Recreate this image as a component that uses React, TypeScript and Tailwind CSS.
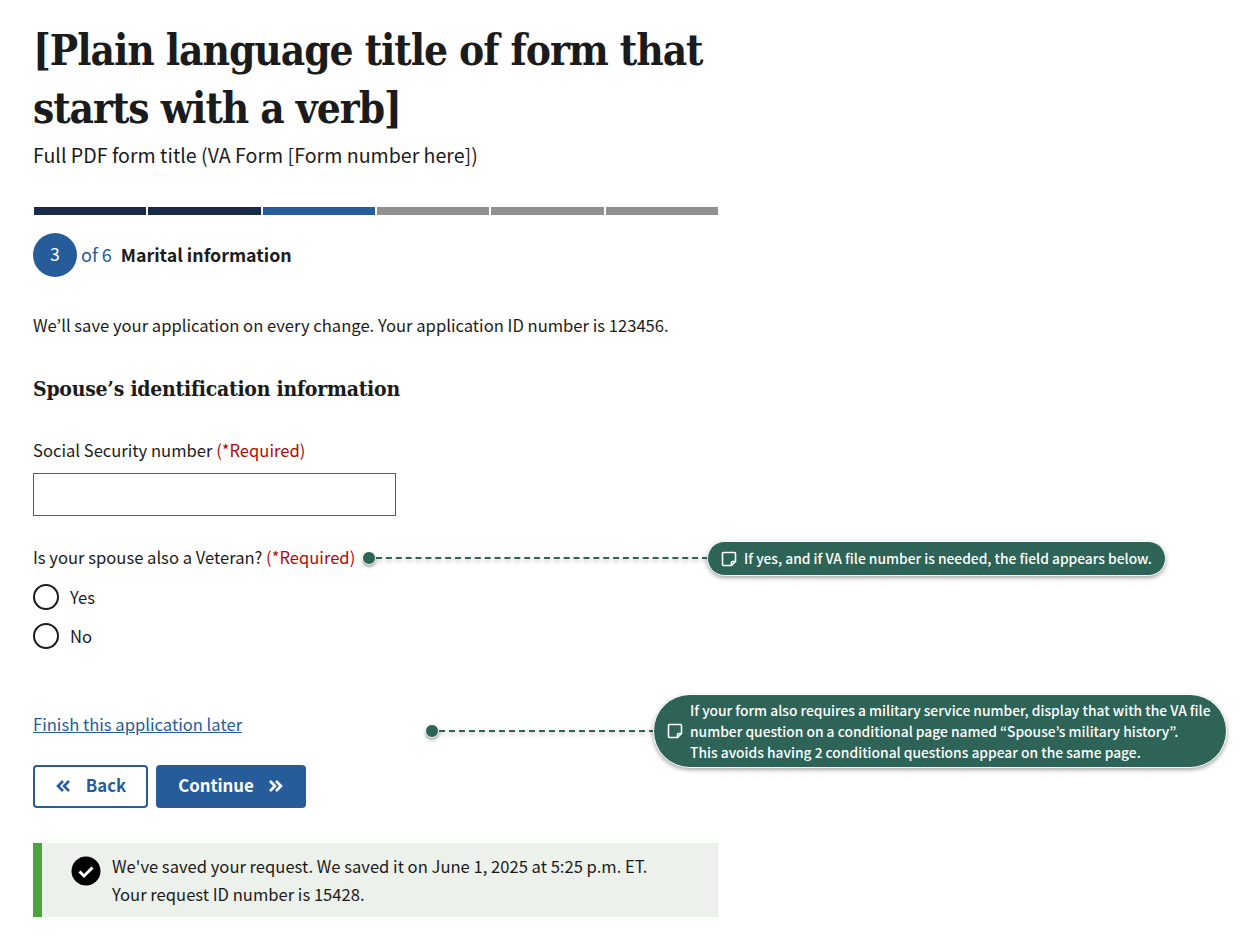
const sans = "font-['Noto_Sans_CJK_KR',sans-serif]";
const serif = "font-['DejaVu_Serif',serif] [font-stretch:condensed]";

function NoteIcon({ className }: { className: string }) {
  return (
    <svg viewBox="0 0 16 16" className={className} fill="none" stroke="white" strokeWidth="1.6" strokeLinejoin="round">
      <path d="M2.5 1.5h11a1 1 0 0 1 1 1v8l-4 4h-8a1 1 0 0 1-1-1v-11a1 1 0 0 1 1-1Z" />
      <path d="M14.5 10.5h-3a1 1 0 0 0-1 1v3" />
    </svg>
  );
}

function Dot({ className }: { className: string }) {
  return <div className={`absolute h-[14px] w-[14px] rounded-full border border-white bg-[#2d6457] shadow-[0_2px_3px_rgba(0,0,0,0.35)] ${className}`} />;
}

function Line({ className }: { className: string }) {
  return <div className={`absolute h-0 border-t-2 border-dashed border-[#2d6457] drop-shadow-[0_2px_2px_rgba(0,0,0,0.3)] ${className}`} />;
}

function Radio({ label, rowClass }: { label: string; rowClass: string }) {
  return (
    <div className={`flex items-center ${rowClass}`}>
      <span className="h-[26px] w-[26px] rounded-full border-2 border-[#1b1b1b] bg-white" />
      <span className="ml-[11px] text-[16.6px] leading-[24px] text-[#1b1b1b]">{label}</span>
    </div>
  );
}

export default function App() {
  return (
    <div lang="en" className={`relative h-[936px] w-[1254px] overflow-hidden bg-white pl-[33px] pt-[22px] ${sans}`}>
      <main className="w-[685px]">
        <h1 className={`${serif} text-[42px] font-bold leading-[58px] tracking-[-1.05px] text-[#1b1b1b]`}>
          [Plain language title of form that starts with a verb]
        </h1>
        <p className="mt-[3px] text-[19.6px] leading-[28px] text-[#1b1b1b]">Full PDF form title (VA Form [Form number here])</p>

        <div className="mt-[38px] flex gap-[2px] pl-[1px]">
          <div className="h-[8px] flex-1 bg-[#1a2b4a]" />
          <div className="h-[8px] flex-1 bg-[#1a2b4a]" />
          <div className="h-[8px] flex-1 bg-[#275c9b]" />
          <div className="h-[8px] flex-1 bg-[#919191]" />
          <div className="h-[8px] flex-1 bg-[#919191]" />
          <div className="h-[8px] flex-1 bg-[#919191]" />
        </div>

        <div className="mt-[18px] flex h-[44px] items-center">
          <span className="flex h-[44px] w-[44px] items-center justify-center rounded-full bg-[#275c9b] pb-[2px] text-[17.6px] text-white">3</span>
          <span className="mb-[2px] ml-[4px] text-[18px] text-[#275c9b]">of 6</span>
          <span className="mb-[2px] ml-[9px] text-[17.8px] font-bold text-[#1b1b1b]">Marital information</span>
        </div>

        <p className="mt-[36px] text-[16.6px] leading-[24px] text-[#1b1b1b]">We’ll save your application on every change. Your application ID number is 123456.</p>

        <h2 className={`${serif} mt-[37px] text-[21px] font-bold leading-[30px] tracking-[-0.25px] text-[#1b1b1b]`}>Spouse’s identification information</h2>

        <label className="mt-[34px] block text-[16.6px] leading-[24px] text-[#1b1b1b]">
          Social Security number <span className="text-[#b50909]">(*Required)</span>
        </label>
        <div className="mt-[11px] h-[43px] w-[363px] border border-[#565c65] bg-white" />

        <p className="mt-[29px] text-[16.6px] leading-[24px] text-[#1b1b1b]">
          Is your spouse also a Veteran? <span className="text-[#b50909]">(*Required)</span>
        </p>
        <div className="mt-[8px]">
          <Radio label="Yes" rowClass="h-[39px]" />
          <Radio label="No" rowClass="h-[40px]" />
        </div>

        <a className="mt-[56px] block text-[16.6px] leading-[24px] text-[#275c9b] underline">Finish this application later</a>

        <div className="mt-[29px] flex gap-[8px]">
          <button className="flex h-[43px] w-[115px] items-center justify-center gap-[15px] rounded-[4px] border-2 border-[#275c9b] bg-white pb-[1px] text-[16.8px] font-bold text-[#275c9b]">
            <svg viewBox="0 0 16 16" className="h-[16px] w-[16px]" fill="none" stroke="currentColor" strokeWidth="2.6"><path d="M8 3 3 8l5 5M14 3 9 8l5 5" /></svg>
            Back
          </button>
          <button className="flex h-[43px] w-[150px] items-center justify-center gap-[14px] rounded-[4px] bg-[#275c9b] pb-[1px] text-[16.8px] font-bold text-white">
            Continue
            <svg viewBox="0 0 16 16" className="h-[16px] w-[16px]" fill="none" stroke="currentColor" strokeWidth="2.6"><path d="m2 3 5 5-5 5M8 3l5 5-5 5" /></svg>
          </button>
        </div>

        <div className="mt-[35px] flex h-[74px] border-l-[9px] border-[#4aa63a] bg-[#ecf1ec] pl-[29px] pt-[9px]">
          <svg viewBox="0 0 30 30" className="mt-[4px] h-[30px] w-[30px] shrink-0">
            <circle cx="15" cy="15" r="14.5" fill="#000" />
            <path d="m8.5 15.5 4.5 4.5 8.5-8.5" fill="none" stroke="#fff" strokeWidth="3" />
          </svg>
          <p className="ml-[11px] text-[16.6px] leading-[28px] text-[#1b1b1b]">
            We've saved your request. We saved it on June 1, 2025 at 5:25 p.m. ET.<br />Your request ID number is 15428.
          </p>
        </div>
      </main>

      <Dot className="left-[362px] top-[551px]" />
      <Line className="left-[376px] top-[557px] w-[332px]" />
      <div className="absolute left-[707px] top-[541px] flex h-[35px] w-[459px] items-center whitespace-nowrap rounded-full border border-white bg-[#2d6457] pl-[13px] text-[13.8px] font-medium text-white shadow-[0_2px_4px_rgba(0,0,0,0.35)]">
        <NoteIcon className="mr-[7px] h-[16px] w-[16px] shrink-0" />
        If yes, and if VA file number is needed, the field appears below.
      </div>

      <Dot className="left-[425px] top-[724px]" />
      <Line className="left-[439px] top-[730px] w-[216px]" />
      <div className="absolute left-[653px] top-[694px] flex h-[74px] w-[574px] items-center whitespace-nowrap rounded-[37px] border border-white bg-[#2d6457] pl-[13px] text-[13.8px] font-medium leading-[21px] text-white shadow-[0_2px_4px_rgba(0,0,0,0.35)]">
        <NoteIcon className="mr-[7px] h-[16px] w-[16px] shrink-0" />
        <p>
          If your form also requires a military service number, display that with the VA file<br />
          number question on a conditional page named “Spouse’s military history”.<br />
          This avoids having 2 conditional questions appear on the same page.
        </p>
      </div>
    </div>
  );
}
